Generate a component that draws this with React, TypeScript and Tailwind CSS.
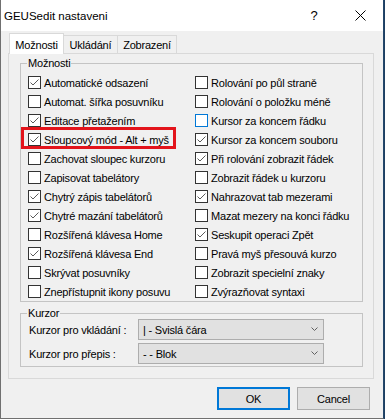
import React from "react";

const left: [string, boolean][] = [
  ["Automatické odsazení", true],
  ["Automat. šířka posuvníku", false],
  ["Editace přetažením", true],
  ["Sloupcový mód - Alt + myš", true],
  ["Zachovat sloupec kurzoru", false],
  ["Zapisovat tabelátory", false],
  ["Chytrý zápis tabelátorů", true],
  ["Chytré mazání tabelátorů", true],
  ["Rozšířená klávesa Home", false],
  ["Rozšířená klávesa End", true],
  ["Skrývat posuvníky", false],
  ["Znepřístupnit ikony posuvu", false],
];

const right: [string, boolean][] = [
  ["Rolování po půl straně", false],
  ["Rolování o položku méně", false],
  ["Kursor za koncem řádku", false],
  ["Kursor za koncem souboru", true],
  ["Při rolování zobrazit řádek", true],
  ["Zobrazit řádek u kurzoru", false],
  ["Nahrazovat tab mezerami", true],
  ["Mazat mezery na konci řádku", false],
  ["Seskupit operaci Zpět", true],
  ["Pravá myš přesouvá kurzo", false],
  ["Zobrazit specielní znaky", false],
  ["Zvýrazňovat syntaxi", false],
];

function Box({ checked, focus }: { checked: boolean; focus?: boolean }) {
  return (
    <span
      className={`w-[13px] h-[13px] border bg-white flex items-center justify-center shrink-0 ${
        focus ? "border-[#0078d7]" : "border-[#333333]"
      }`}
    >
      {checked && (
        <svg width="11" height="11" viewBox="0 0 11 11">
          <path d="M1.5 5.5 L4 8 L9.5 2.5" stroke="#5a5a5a" strokeWidth="1" fill="none" />
        </svg>
      )}
    </span>
  );
}

function Row({ label, checked, focus, highlight }: { label: string; checked: boolean; focus?: boolean; highlight?: boolean }) {
  return (
    <div className="relative h-[19px] flex items-center gap-[3px] whitespace-nowrap">
      <Box checked={checked} focus={focus} />
      <span>{label}</span>
      {highlight && (
        <span className="absolute left-[-7px] top-[-3px] w-[155px] h-[22px] border-[3px] border-[#e3141b]" />
      )}
    </div>
  );
}

function Combo({ value }: { value: string }) {
  return (
    <div className="w-[186px] h-[21px] border border-[#adadad] bg-[#e1e1e1] flex items-center pl-[4px] pr-[5px]">
      <span className="flex-1">{value}</span>
      <svg width="7" height="5" viewBox="0 0 7 5">
        <path d="M0.5 0.5 L3.5 3.5 L6.5 0.5" stroke="#606060" strokeWidth="1" fill="none" />
      </svg>
    </div>
  );
}

export default function App() {
  return (
    <div className="w-[385px] h-[419px] bg-[#1d3f62] font-['Liberation_Sans',Arial,sans-serif] text-[11px] tracking-[-0.2px] text-black leading-[14px]">
      <div className="w-[384px] h-[419px] bg-[#f0f0f0] border-l border-b border-r border-l-[#707070] border-b-[#707070] border-r-[#24476b] flex flex-col">
        {/* title bar */}
        <div className="h-[31px] bg-white flex items-center shrink-0">
          <span className="pl-[3px] text-[11.5px] tracking-normal">GEUSedit nastaveni</span>
          <div className="ml-auto flex h-full">
            <div className="w-[46px] flex items-center justify-center text-[13px]">?</div>
            <div className="w-[46px] flex items-center justify-center">
              <svg width="11" height="11" viewBox="0 0 11 11">
                <path d="M0.5 0.5 L10.5 10.5 M10.5 0.5 L0.5 10.5" stroke="#000" strokeWidth="1" />
              </svg>
            </div>
          </div>
        </div>

        {/* tabs */}
        <div className="h-[22px] flex items-end pl-[8px] shrink-0">
          <div className="relative z-10 w-[55px] h-[21px] mb-[-1px] border border-b-0 border-[#d9d9d9] bg-white flex items-start justify-center pt-[4px]">
            Možnosti
          </div>
          <div className="-ml-px w-[55px] h-[18px] border border-b-0 border-[#d9d9d9] bg-[#f0f0f0] flex items-center justify-center">
            Ukládání
          </div>
          <div className="-ml-px w-[60px] h-[18px] border border-b-0 border-[#d9d9d9] bg-[#f0f0f0] flex items-center justify-center">
            Zobrazení
          </div>
        </div>

        {/* pane */}
        <div className="ml-[7px] w-[366px] h-[326px] border border-[#d9d9d9] bg-[#f0f0f0] shrink-0 flex flex-col">
          <fieldset className="ml-[11px] mt-[2px] w-[343px] border border-[#c4c4c4] pl-[7px] pb-0 pt-[3px]">
            <legend className="ml-[-1px] px-[1px] h-[14px]">Možnosti</legend>
            <div className="flex">
              <div className="w-[167px] flex flex-col">
                {left.map(([l, c], i) => (
                  <Row key={l} label={l} checked={c} highlight={i === 3} />
                ))}
              </div>
              <div className="flex flex-col">
                {right.map(([l, c], i) => (
                  <Row key={l} label={l} checked={c} focus={i === 2} />
                ))}
              </div>
            </div>
          </fieldset>

          <fieldset className="ml-[11px] mt-[4px] w-[343px] border border-[#c4c4c4] pl-[8px] pb-[2px]">
            <legend className="ml-[-2px] px-[1px] h-[14px]">Kurzor</legend>
            <div className="flex flex-col gap-[3px] mt-[-1px]">
              <div className="flex items-center">
                <span className="w-[109px]">Kurzor pro vkládání :</span>
                <Combo value="| - Svislá čára" />
              </div>
              <div className="flex items-center">
                <span className="w-[109px]">Kurzor pro přepis :</span>
                <Combo value="- - Blok" />
              </div>
            </div>
          </fieldset>
        </div>

        {/* buttons */}
        <div className="flex justify-end gap-[7px] pr-[13px] mt-[8px]">
          <button className="w-[73px] h-[23px] border-2 border-[#0078d7] bg-[#e1e1e1] flex items-center justify-center">
            OK
          </button>
          <button className="w-[73px] h-[23px] border border-[#adadad] bg-[#e1e1e1] flex items-center justify-center">
            Cancel
          </button>
        </div>
      </div>
    </div>
  );
}
